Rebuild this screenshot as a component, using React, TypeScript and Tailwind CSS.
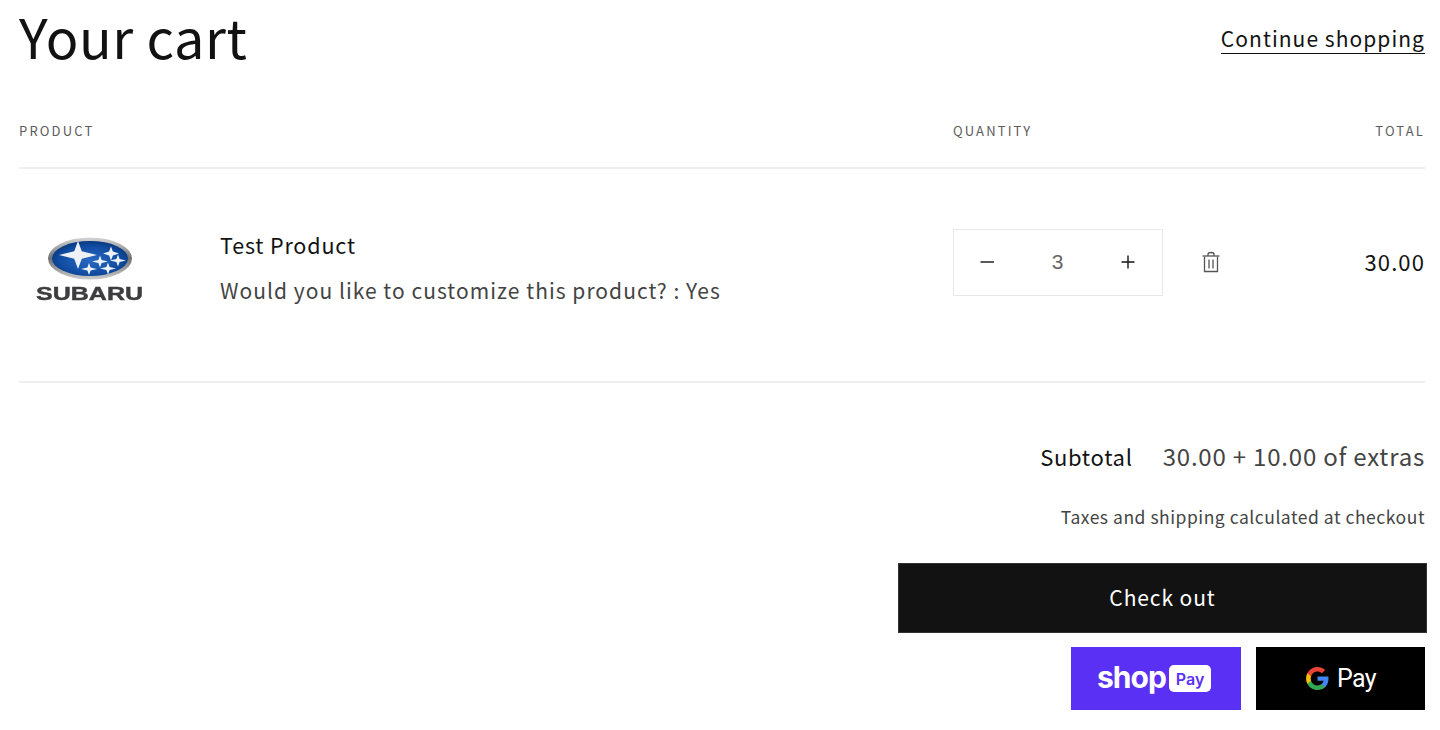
import React from "react";

const font = { fontFamily: '"Noto Sans CJK JP", "Noto Sans", sans-serif' };

function Star({ cx, cy, rx, ry }: { cx: number; cy: number; rx: number; ry: number }) {
  const k = Math.min(rx, ry) * 0.27;
  return (
    <path
      d={`M${cx} ${cy - ry}L${cx + k} ${cy - k}L${cx + rx} ${cy}L${cx + k} ${cy + k}L${cx} ${cy + ry}L${cx - k} ${cy + k}L${cx - rx} ${cy}L${cx - k} ${cy - k}Z`}
      fill="#eef1f6"
    />
  );
}

function SubaruLogo() {
  return (
    <div className="flex flex-col items-center w-[106px]">
      <svg width="86" height="43" viewBox="0 0 86 43" className="block blur-[0.4px]">
        <defs>
          <linearGradient id="rim" x1="0" y1="0" x2="0" y2="1">
            <stop offset="0" stopColor="#d4d5d6" />
            <stop offset="0.5" stopColor="#6f7274" />
            <stop offset="1" stopColor="#c9cbcc" />
          </linearGradient>
          <radialGradient id="blue" cx="0.5" cy="0.55" r="0.7">
            <stop offset="0" stopColor="#2a69c4" />
            <stop offset="0.6" stopColor="#0f4a9e" />
            <stop offset="1" stopColor="#042558" />
          </radialGradient>
        </defs>
        <ellipse cx="43" cy="21.5" rx="42" ry="21" fill="url(#rim)" />
        <ellipse cx="43" cy="21.5" rx="38" ry="17.5" fill="url(#blue)" />
        <Star cx={31} cy={18} rx={19} ry={14} />
        <Star cx={64} cy={16.5} rx={8} ry={7} />
        <Star cx={53} cy={24.5} rx={8} ry={6} />
        <Star cx={71} cy={23.5} rx={8} ry={6} />
        <Star cx={42} cy={32} rx={8} ry={6} />
        <Star cx={61} cy={31.5} rx={8} ry={6} />
      </svg>
      <span
        className="mt-[5px] text-[18px] leading-[18px] font-bold text-[#3d3d3f] inline-block scale-x-[1.39] [-webkit-text-stroke:0.4px_#3d3d3f]"
        style={{ fontFamily: '"Liberation Sans", sans-serif' }}
      >
        SUBARU
      </span>
    </div>
  );
}

function TrashIcon() {
  return (
    <svg width="20" height="22" viewBox="0 0 20 22" fill="none" stroke="#555" strokeWidth="1.3" className="block">
      <path d="M1.5 5h17" />
      <path d="M7 5V3.2C7 2 8 1.5 10 1.5s3 .5 3 1.7V5" />
      <path d="M3.5 5.5v15h13v-15" />
      <path d="M8 8.5v9M12 8.5v9" />
    </svg>
  );
}

function GoogleG() {
  return (
    <svg width="25" height="25" viewBox="0 0 48 48" className="block">
      <path fill="#4285F4" d="M45.1 24.5c0-1.6-.1-3.1-.4-4.5H24v8.5h11.8c-.5 2.7-2.1 5-4.4 6.6v5.5h7.1c4.2-3.8 6.6-9.5 6.6-16.1z" />
      <path fill="#34A853" d="M24 46c5.9 0 10.9-2 14.5-5.3l-7.1-5.5c-2 1.3-4.5 2.1-7.4 2.1-5.7 0-10.6-3.9-12.3-9.1H4.4v5.7C8 41.1 15.4 46 24 46z" />
      <path fill="#FBBC05" d="M11.7 28.2c-.4-1.3-.7-2.7-.7-4.2s.3-2.9.7-4.2v-5.7H4.4C2.9 17.1 2 20.4 2 24s.9 6.9 2.4 9.9l7.3-5.7z" />
      <path fill="#EA4335" d="M24 10.7c3.2 0 6.1 1.1 8.4 3.3l6.3-6.3C34.9 4.1 29.9 2 24 2 15.4 2 8 6.9 4.4 14.1l7.3 5.7c1.7-5.2 6.6-9.1 12.3-9.1z" />
    </svg>
  );
}

export default function App() {
  return (
    <div className="bg-white h-[730px] overflow-hidden pl-[19px] pr-[15px] text-[#121212]" style={font}>
      <header className="flex items-start justify-between h-[112px]">
        <h1 className="text-[54px] leading-[72px] font-normal tracking-[0.55px]">Your cart</h1>
        <a className="mt-[24px] text-[21px] leading-[28px] tracking-[1.05px] border-b border-[#121212] h-[30px]">
          Continue shopping
        </a>
      </header>

      <div className="grid grid-cols-[934px_1fr_auto] items-center h-[57px] border-b-2 border-[#efefef] pb-[18px] text-[#5c5c5c] text-[13px] tracking-[2.15px]">
        <span>PRODUCT</span>
        <span>QUANTITY</span>
        <span>TOTAL</span>
      </div>

      <div className="grid grid-cols-[934px_1fr_auto] items-start h-[214px] border-b-2 border-[#efefef] pt-[60px]">
        <div className="flex items-start">
          <div className="w-[201px] pl-[18px] pt-[8px]">
            <SubaruLogo />
          </div>
          <div className="pt-px">
            <div className="text-[21.5px] leading-[30px] tracking-[0.85px]">Test Product</div>
            <div className="mt-[15px] text-[21px] leading-[30px] tracking-[1.03px] text-[#444]">
              Would you like to customize this product? : Yes
            </div>
          </div>
        </div>
        <div className="flex items-center">
          <div className="flex items-center justify-between w-[210px] h-[67px] border border-[#e8e8e8] pl-[24px] pr-[25px]">
            <svg width="18" height="18" viewBox="0 0 18 18" stroke="#121212" strokeWidth="1.4" className="-mt-px"><path d="M2.5 9h13.5" /></svg>
            <span className="text-[21px] text-[#666] -mt-[2px]" style={{ fontFamily: '"Liberation Sans", sans-serif' }}>3</span>
            <svg width="18" height="18" viewBox="0 0 18 18" stroke="#121212" strokeWidth="1.4" className="-mt-px"><path d="M2.5 9h13M9 2.5v13" /></svg>
          </div>
          <div className="ml-[38px] -mt-[2px]">
            <TrashIcon />
          </div>
        </div>
        <span className="h-[65px] flex items-center text-[22px] tracking-[1.1px]">30.00</span>
      </div>

      <div className="flex flex-col items-end">
        <div className="flex items-baseline mt-[55px] h-[36px]">
          <span className="text-[22px] leading-[36px] tracking-[0.7px]">Subtotal</span>
          <span className="ml-[30px] text-[24px] leading-[36px] tracking-[0.8px] text-[#444]">30.00 + 10.00 of extras</span>
        </div>
        <div className="mt-[29px] text-[17.5px] leading-[28px] tracking-[0.52px] text-[#444]">
          Taxes and shipping calculated at checkout
        </div>
        <button className="mt-[32px] -mr-[2px] w-[529px] h-[70px] bg-[#121212] text-white text-[21px] tracking-[0.9px] border border-[#333]">
          Check out
        </button>
        <div className="flex gap-[15px] mt-[14px]">
          <div className="w-[170px] h-[63px] bg-[#5a31f4] flex items-center justify-center gap-[3px] pr-[4px] text-white">
            <span className="text-[30px] leading-none font-bold tracking-[-0.9px] -mt-[3px]" style={{ fontFamily: '"Inter", sans-serif' }}>shop</span>
            <span className="bg-white text-[#5a31f4] rounded-[5px] w-[42px] h-[27px] flex items-center justify-center text-[16px] font-semibold" style={{ fontFamily: '"Inter", sans-serif' }}>Pay</span>
          </div>
          <div className="w-[169px] h-[63px] bg-black flex items-center justify-center gap-[7px] text-white">
            <GoogleG />
            <span className="text-[25px] leading-none font-normal tracking-[-0.6px]" style={{ fontFamily: '"Roboto", sans-serif' }}>Pay</span>
          </div>
        </div>
      </div>
    </div>
  );
}
